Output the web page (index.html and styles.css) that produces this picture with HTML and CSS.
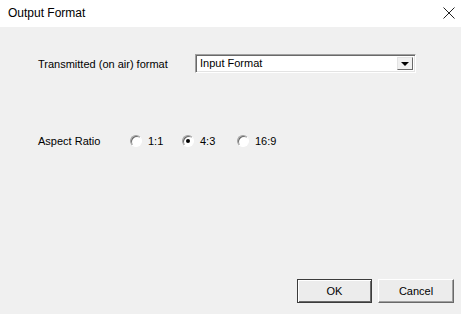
FILE: index.html
```html
<!DOCTYPE html>
<html lang="en">
<head>
  <meta charset="UTF-8" />
  <title>Output Format</title>
  <link rel="stylesheet" href="styles.css">
</head>
<body>
  <div class="titlebar">
    <span class="title">Output Format</span>
    <svg class="close" width="12" height="12" viewBox="0 0 12 12">
      <path d="M0.5 0.5 L11.5 11.5 M11.5 0.5 L0.5 11.5" stroke="#222" stroke-width="1" fill="none" />
    </svg>
  </div>

  <div class="content">
    <div class="row format-row">
      <span class="label">Transmitted (on air) format</span>
      <div class="combo">
        <span class="combo-text">Input Format</span>
        <span class="combo-btn"><span class="arrow"></span></span>
      </div>
    </div>

    <div class="row aspect-row">
      <span class="label aspect-label">Aspect Ratio</span>
      <div class="radios">
        <span class="radio-item first"><span class="radio"></span>1:1</span>
        <span class="radio-item second"><span class="radio checked"></span>4:3</span>
        <span class="radio-item"><span class="radio"></span>16:9</span>
      </div>
    </div>

    <div class="button-row">
      <button class="btn default">OK</button>
      <button class="btn">Cancel</button>
    </div>
  </div>
</body>
</html>
```

FILE: styles.css
```css
:root {
  --face: #f0f0f0;
  --shadow: #a0a0a0;
  --dark: #696969;
  --text: #000000;
}

html, body {
  margin: 0;
  height: 100%;
}

body {
  width: 461px;
  height: 314px;
  background: var(--face);
  font-family: 'Liberation Sans', Arial, sans-serif;
  font-size: 11px;
  color: var(--text);
  display: flex;
  flex-direction: column;
  overflow: hidden;
}

.titlebar {
  height: 27px;
  background: #ffffff;
  display: flex;
  align-items: center;
  justify-content: space-between;
  padding: 0 6px 2px 8px;
  box-sizing: border-box;
}

.title {
  font-size: 12px;
  color: #000;
}

.close {
  display: block;
}

.content {
  flex: 1;
  display: flex;
  flex-direction: column;
  padding: 27px 7px 11px 38px;
}

.row {
  display: flex;
  align-items: center;
}

.label {
  width: 157px;
  flex-shrink: 0;
}

.aspect-label {
  width: 92px;
}

.combo {
  width: 221px;
  height: 19px;
  box-sizing: border-box;
  background: #ffffff;
  border: 1px solid;
  border-color: var(--shadow) #ffffff #ffffff var(--shadow);
  box-shadow: inset 1px 1px 0 var(--dark), inset -1px -1px 0 #e3e3e3;
  display: flex;
  align-items: stretch;
  padding: 2px 2px 2px 4px;
}

.combo-text {
  flex: 1;
  line-height: 13px;
}

.combo-btn {
  width: 16px;
  background: var(--face);
  box-sizing: border-box;
  border: 1px solid;
  border-color: #e3e3e3 var(--dark) var(--dark) #e3e3e3;
  display: flex;
  align-items: center;
  justify-content: center;
}

.arrow {
  width: 0;
  height: 0;
  border-left: 4px solid transparent;
  border-right: 4px solid transparent;
  border-top: 4px solid #000;
  margin-top: 1px;
}

.aspect-row {
  margin-top: 62px;
}

.radios {
  display: flex;
  align-items: center;
}

.radio-item {
  display: flex;
  align-items: center;
  gap: 6px;
}

.radio-item.first {
  width: 52px;
}

.radio-item.second {
  width: 55px;
}

.radio {
  width: 12px;
  height: 12px;
  box-sizing: border-box;
  border-radius: 50%;
  border: 1px solid;
  border-color: var(--shadow) #ffffff #ffffff var(--shadow);
  box-shadow: inset 1px 1px 0 var(--dark);
  background: #ffffff;
  position: relative;
}

.radio.checked::after {
  content: '';
  position: absolute;
  left: 3px;
  top: 3px;
  width: 4px;
  height: 4px;
  border-radius: 50%;
  background: #000;
}

.button-row {
  margin-top: auto;
  display: flex;
  justify-content: flex-end;
  gap: 6px;
}

.btn {
  font-family: inherit;
  font-size: 11px;
  height: 24px;
  background: #ececec;
  color: #000;
  border: 1px solid;
  border-color: #ffffff var(--dark) var(--dark) #ffffff;
  box-shadow: inset -1px -1px 0 var(--shadow);
  padding: 0;
  width: 76px;
}

.btn.default {
  width: 75px;
  border-color: #3c3c3c;
  box-shadow: inset 1px 1px 0 #ffffff, inset -1px -1px 0 var(--dark);
}
```
